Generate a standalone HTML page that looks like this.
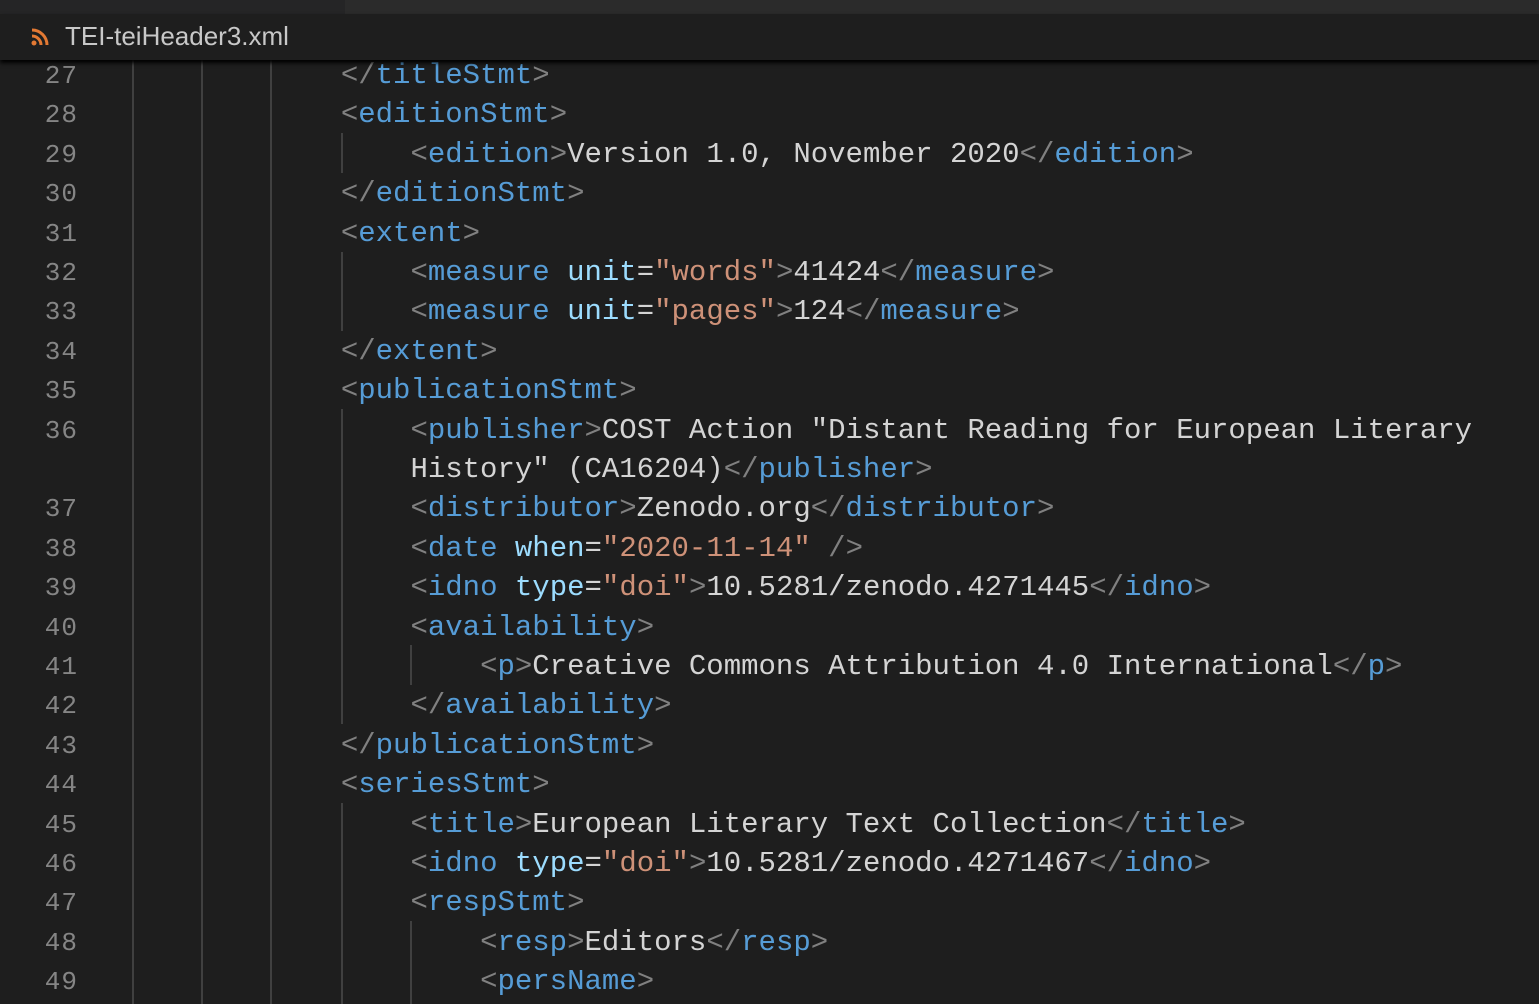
<!DOCTYPE html><html><head><style>
body{margin:0;width:1539px;height:1004px;background:#1e1e1e;overflow:hidden;position:relative;font-family:"Liberation Mono",monospace;}
.top{position:absolute;left:0;top:0;width:1539px;height:14px;background:#252526}
.top2{position:absolute;left:345px;top:0;width:1194px;height:14px;background:#2b2b2b}
.tab{position:absolute;left:0;top:14px;width:1539px;height:46px;background:#1e1e1e;box-shadow:0 3px 4px #000}
.tabt{position:absolute;left:65px;top:7px;font:26px "Liberation Sans",sans-serif;color:#c8c8c8}
.ln{position:absolute;left:0;width:78px;text-align:right;color:#858585;font-size:26px;letter-spacing:1px}
.code{position:absolute;left:132px;white-space:pre;font-size:29px;color:#d4d4d4}
.g{position:absolute;width:2px;background:#404040}
.b{color:#808080}.t{color:#569cd6}.a{color:#9cdcfe}.s{color:#ce9178}
</style></head><body>
<div class="top"></div><div class="top2"></div>
<div class="g" style="left:132px;top:60px;height:944px"></div>
<div class="g" style="left:201px;top:60px;height:944px"></div>
<div class="g" style="left:270px;top:60px;height:944px"></div>
<div class="g" style="left:341px;top:133px;height:40px"></div>
<div class="g" style="left:341px;top:252px;height:79px"></div>
<div class="g" style="left:341px;top:409px;height:315px"></div>
<div class="g" style="left:410px;top:645px;height:40px"></div>
<div class="g" style="left:341px;top:803px;height:201px"></div>
<div class="g" style="left:410px;top:921px;height:83px"></div>
<div id="L"></div>
<div class="tab"><svg style="position:absolute;left:31px;top:14px" width="18" height="18" viewBox="0 0 18 18"><circle cx="3" cy="15" r="2.5" fill="#e37933"/><path d="M1 8a9 9 0 0 1 9 9M1 2a15 15 0 0 1 15 15" stroke="#e37933" stroke-width="3" fill="none"/></svg><div class="tabt">TEI-teiHeader3.xml</div></div>
<script>
var B='<span class="b">',T='<span class="t">',A='<span class="a">',S='<span class="s">',E='</span>';
function o(n,i){return ' '.repeat(i)+B+'&lt;'+E+T+n+E+B+'&gt;'+E}
function c(n){return B+'&lt;/'+E+T+n+E+B+'&gt;'+E}
function oa(n,a,v){return B+'&lt;'+E+T+n+E+' '+A+a+E+'='+S+'"'+v+'"'+E+B+'&gt;'+E}
var rows=[
['27','            '+c('titleStmt')],
['28',o('editionStmt',12)],
['29','                '+o('edition',0)+'Version 1.0, November 2020'+c('edition')],
['30','            '+c('editionStmt')],
['31',o('extent',12)],
['32','                '+oa('measure','unit','words')+'41424'+c('measure')],
['33','                '+oa('measure','unit','pages')+'124'+c('measure')],
['34','            '+c('extent')],
['35',o('publicationStmt',12)],
['36','                '+o('publisher',0)+'COST Action "Distant Reading for European Literary'],
['','                History" (CA16204)'+c('publisher')],
['37','                '+o('distributor',0)+'Zenodo.org'+c('distributor')],
['38','                '+B+'&lt;'+E+T+'date'+E+' '+A+'when'+E+'='+S+'"2020-11-14"'+E+' '+B+'/&gt;'+E],
['39','                '+oa('idno','type','doi')+'10.5281/zenodo.4271445'+c('idno')],
['40',o('availability',16)],
['41','                    '+o('p',0)+'Creative Commons Attribution 4.0 International'+c('p')],
['42','                '+c('availability')],
['43','            '+c('publicationStmt')],
['44',o('seriesStmt',12)],
['45','                '+o('title',0)+'European Literary Text Collection'+c('title')],
['46','                '+oa('idno','type','doi')+'10.5281/zenodo.4271467'+c('idno')],
['47',o('respStmt',16)],
['48','                    '+o('resp',0)+'Editors'+c('resp')],
['49',o('persName',20)]];
var h='';rows.forEach(function(r,i){var y=56+i*39.4;
h+='<div class="ln" style="top:'+(y+1)+'px;line-height:39.4px">'+r[0]+'</div><div class="code" style="top:'+y+'px;line-height:39.4px">'+r[1]+'</div>';});
document.getElementById('L').innerHTML=h;
</script></body></html>
